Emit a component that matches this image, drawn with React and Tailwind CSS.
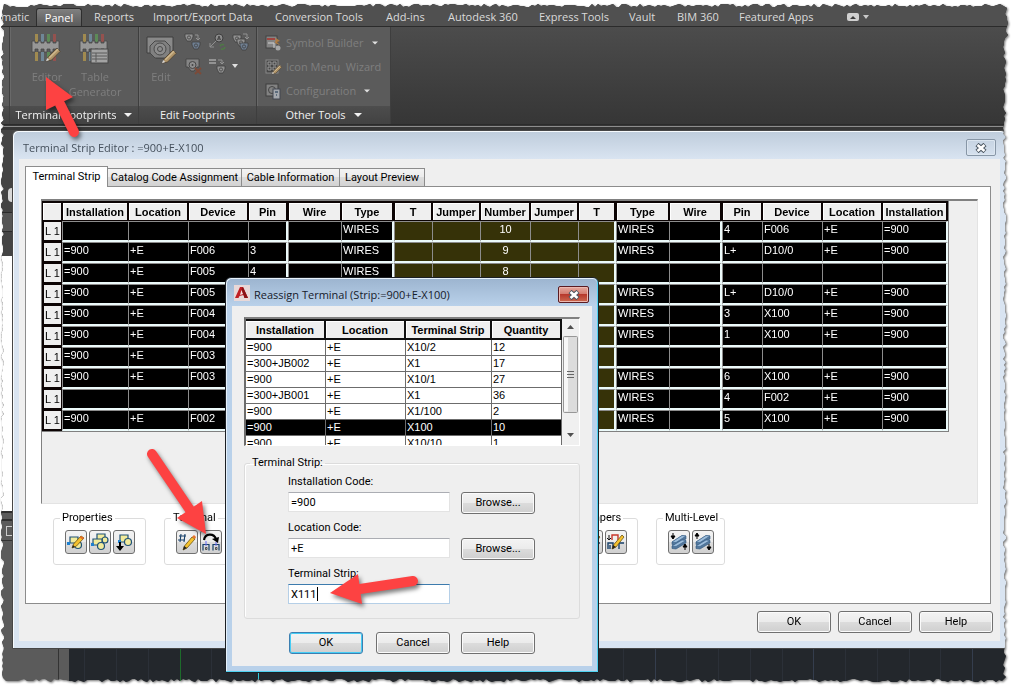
import React from 'react';

const ribbonTabs = [
  { label: 'Reports', width: 'w-[59px]' },
  { label: 'Import/Export Data', width: 'w-[122px]' },
  { label: 'Conversion Tools', width: 'w-[111px]' },
  { label: 'Add-ins', width: 'w-[62px]' },
  { label: 'Autodesk 360', width: 'w-[91px]' },
  { label: 'Express Tools', width: 'w-[90px]' },
  { label: 'Vault', width: 'w-[48px]' },
  { label: 'BIM 360', width: 'w-[62px]' },
  { label: 'Featured Apps', width: 'w-[108px]' },
];

const columns = [
  { name: '', width: 'w-[20px]' },
  { name: 'Installation', width: 'w-[66px]' },
  { name: 'Location', width: 'w-[60px]' },
  { name: 'Device', width: 'w-[60px]' },
  { name: 'Pin', width: 'w-[40px]', thick: true },
  { name: 'Wire', width: 'w-[53px]' },
  { name: 'Type', width: 'w-[53px]', thick: true },
  { name: 'T', width: 'w-[38px]', mid: true },
  { name: 'Jumper', width: 'w-[48px]', mid: true },
  { name: 'Number', width: 'w-[50px]', mid: true },
  { name: 'Jumper', width: 'w-[48px]', mid: true },
  { name: 'T', width: 'w-[38px]', mid: true, thick: true },
  { name: 'Type', width: 'w-[53px]' },
  { name: 'Wire', width: 'w-[53px]', thick: true },
  { name: 'Pin', width: 'w-[40px]' },
  { name: 'Device', width: 'w-[60px]' },
  { name: 'Location', width: 'w-[60px]' },
  { name: 'Installation', width: 'w-[66px]', thick: true },
];

// left: installation, location, device, pin, wire, type; right: type, wire, pin, device, location, installation
const terminals = [
  { n: 10, left: ['', '', '', '', '', 'WIRES'], right: ['WIRES', '', '4', 'F006', '+E', '=900'] },
  { n: 9, left: ['=900', '+E', 'F006', '3', '', 'WIRES'], right: ['WIRES', '', 'L+', 'D10/0', '+E', '=900'] },
  { n: 8, left: ['=900', '+E', 'F005', '4', '', 'WIRES'], right: ['', '', '', '', '', ''] },
  { n: 7, left: ['=900', '+E', 'F005', '', '', ''], right: ['WIRES', '', 'L+', 'D10/0', '+E', '=900'] },
  { n: 6, left: ['=900', '+E', 'F004', '', '', ''], right: ['WIRES', '', '3', 'X100', '+E', '=900'] },
  { n: 5, left: ['=900', '+E', 'F004', '', '', ''], right: ['WIRES', '', '1', 'X100', '+E', '=900'] },
  { n: 4, left: ['=900', '+E', 'F003', '', '', ''], right: ['', '', '', '', '', ''] },
  { n: 3, left: ['=900', '+E', 'F003', '', '', ''], right: ['WIRES', '', '6', 'X100', '+E', '=900'] },
  { n: 2, left: ['', '', '', '', '', ''], right: ['WIRES', '', '4', 'F002', '+E', '=900'] },
  { n: 1, left: ['=900', '+E', 'F002', '', '', ''], right: ['WIRES', '', '5', 'X100', '+E', '=900'] },
];

const strips = [
  ['=900', '+E', 'X10/2', '12'],
  ['=300+JB002', '+E', 'X1', '17'],
  ['=900', '+E', 'X10/1', '27'],
  ['=300+JB001', '+E', 'X1', '36'],
  ['=900', '+E', 'X1/100', '2'],
  ['=900', '+E', 'X100', '10'],
  ['=900', '+E', 'X10/10', '1'],
];

// Ragged paper outline, measured inwards from each side
function tornOutline() {
  let seed = 41;
  const jag = (amp) => {
    seed = (seed * 16807) % 2147483647;
    return Math.round((seed / 2147483647) * amp);
  };
  const pts = [];
  for (let x = 4; x < 1002; x += 3) pts.push(`${x}px ${4 + jag(3)}px`);
  for (let y = 8; y < 680; y += 3) {
    const inset = y < 40 ? 6 : 8;
    pts.push(`calc(100% - ${inset + jag(3)}px) ${y}px`);
  }
  for (let x = 1002; x > 5; x -= 3) pts.push(`${x}px ${679 + jag(3)}px`);
  for (let y = 678; y > 6; y -= 3) pts.push(`${1 + jag(3)}px ${y}px`);
  return `polygon(${pts.join(', ')})`;
}

function Caret({ className = '' }) {
  return (
    <svg width="8" height="4" viewBox="0 0 8 4" className={className} aria-hidden="true">
      <path d="M0 0h8L4 4z" fill="currentColor" />
    </svg>
  );
}

function Pencil({ x, y, s = 1 }) {
  return (
    <g transform={`translate(${x} ${y}) scale(${s})`}>
      <path d="M0 12L2 8 10 0l3 3-8 8z" fill="#b09468" stroke="#504538" strokeWidth="0.8" />
      <path d="M3 9L11 1" stroke="#d0bb93" strokeWidth="1.2" />
      <path d="M0 12l1-3 2 2z" fill="#d5d5d5" />
    </g>
  );
}

function TerminalIcon({ table }) {
  const wires = ['#a08a50', '#6f8797', '#5d8a58', '#94524f'];
  return (
    <svg width="32" height="32" viewBox="0 0 32 32" aria-hidden="true">
      {wires.map((c, i) => (
        <g key={c} fill={c}>
          <rect x={4 + i * 6} y="1" width="3" height="8" />
          <rect x={4 + i * 6} y="19" width="3" height="9" />
        </g>
      ))}
      <path
        d="M1 8h3v2h3V8h3v2h3V8h3v2h3V8h3v2h3V8h3v11h-3v-3h-3v3h-3v-3h-3v3h-3v-3h-3v3H7v-3H4v3H1z"
        fill="#979797"
        stroke="#464646"
        strokeWidth="0.8"
      />
      {table ? (
        <g>
          <rect x="12" y="16" width="17" height="14" fill="#a3a3a3" stroke="#474747" />
          <path d="M13 20h15M13 23h15M13 26h15M17 20v9" stroke="#5a5a5a" />
        </g>
      ) : (
        <Pencil x={15} y={15} s={1.1} />
      )}
    </svg>
  );
}

function FootprintIcon() {
  return (
    <svg width="32" height="32" viewBox="0 0 32 32" aria-hidden="true">
      <path d="M2 4h26v16h-4l-5 5h-8l-5-5H2z" fill="#898989" stroke="#3e3e3e" />
      <path d="M10 8h10l5 5v7l-5 5H10l-5-5v-7z" fill="#808080" stroke="#484848" />
      <circle cx="15" cy="16" r="6" fill="#8d8d8d" stroke="#4b4b4b" />
      <circle cx="15" cy="16" r="2.5" fill="none" stroke="#4b4b4b" />
      <Pencil x={17} y={17} s={1.1} />
    </svg>
  );
}

function SmallFootprint({ x, y, fill = '#929292' }) {
  return (
    <g transform={`translate(${x} ${y})`}>
      <path d="M0 0h8v3L6 7H2L0 3z" fill={fill} stroke="#3f3f3f" strokeWidth="0.8" />
      <circle cx="4" cy="3.5" r="1.6" fill="none" stroke="#3f3f3f" strokeWidth="0.8" />
    </g>
  );
}

function MiniIcon({ kind }) {
  return (
    <svg width="18" height="18" viewBox="0 0 18 18" aria-hidden="true">
      {kind === 'copy' && (
        <g>
          <SmallFootprint x={1} y={1} />
          <SmallFootprint x={8} y={9} fill="#6f7f92" />
          <path d="M11 2h3v4M12 5l2 2 2-2" fill="none" stroke="#929292" />
        </g>
      )}
      {kind === 'rename' && (
        <g>
          <circle cx="11" cy="5" r="4" fill="#8b8b8b" stroke="#3f3f3f" />
          <path d="M9.5 7L11 3l1.5 4M10 6h2" stroke="#333" strokeWidth="0.8" fill="none" />
          <path d="M8 8l-6 6M2 10v4h4" fill="none" stroke="#909090" />
          <path d="M12 13a3 3 0 0 1 4-1M17 14a3 3 0 0 1-4 2" fill="none" stroke="#4e7b45" strokeWidth="1.4" />
        </g>
      )}
      {kind === 'multi' && (
        <g>
          <SmallFootprint x={1} y={2} />
          <SmallFootprint x={5} y={6} />
          <SmallFootprint x={8} y={10} fill="#6f7f92" />
          <path d="M11 1h4v4M13 4l2 2 2-2" fill="none" stroke="#929292" />
        </g>
      )}
      {kind === 'delete' && (
        <g>
          <path d="M2 2h13v8h-2l-3 4H7l-3-4H2z" fill="#858585" stroke="#404040" strokeWidth="0.8" />
          <circle cx="8.5" cy="8" r="3.5" fill="#8f8f8f" stroke="#464646" />
          <circle cx="8.5" cy="8" r="1" fill="#464646" />
          <path d="M11 11l6 6M17 11l-6 6" stroke="#7d4a38" strokeWidth="1.8" />
        </g>
      )}
      {kind === 'list' && (
        <g>
          <path d="M1 3h7M1 6h7" stroke="#939393" strokeWidth="2" />
          <path d="M10 3h4v4M12 5l2 2 2-2" fill="none" stroke="#929292" />
          <SmallFootprint x={9} y={9} />
        </g>
      )}
      {kind === 'builder' && (
        <g>
          <rect x="2" y="2" width="11" height="12" fill="#848484" stroke="#424242" />
          <path d="M3 5h8" stroke="#a04540" strokeWidth="2" />
          <path d="M4 9h6v5" stroke="#d0d0d0" fill="none" />
          <path d="M12 4l4 3-3 1 3 3-5-2z" fill="#b07c42" />
          <circle cx="14" cy="14" r="2.5" fill="#a8a8a8" />
        </g>
      )}
      {kind === 'menu' && (
        <g>
          <rect x="2" y="2" width="12" height="13" fill="#474747" stroke="#898989" />
          <path d="M4 4h3v3H4zM9 4h3v3H9zM4 9h3v3H4zM9 9h3v3H9z" fill="none" stroke="#999" />
          <Pencil x={8} y={7} s={0.75} />
        </g>
      )}
      {kind === 'config' && (
        <g>
          <rect x="2" y="2" width="12" height="12" fill="#828282" stroke="#3f3f3f" />
          <circle cx="8" cy="8" r="3.5" fill="none" stroke="#444" />
          <rect x="9" y="7" width="7" height="10" fill="#a4a8ae" stroke="#424750" />
          <path d="M11 10h3M12 13h1" stroke="#44586e" strokeWidth="1.5" />
        </g>
      )}
    </svg>
  );
}

function ToolIcon({ kind }) {
  return (
    <svg width="18" height="18" viewBox="0 0 18 18" aria-hidden="true">
      {(kind === 'edit' || kind === 'copy' || kind === 'pick') && (
        <g stroke="#1f5276" strokeWidth="1.2" fill="#f2eb9b">
          {kind === 'edit' && (
            <g>
              <circle cx="11" cy="12" r="3.5" />
              <path d="M3 4h8v6H3z" />
              <rect x="0" y="9" width="3" height="3" fill="#1d80d0" stroke="none" />
              <path d="M5 15l1.5-4L14 3l3 2-7.5 8z" fill="#f5c22e" stroke="#6b5410" strokeWidth="0.8" />
              <path d="M14 3l3 2-1.5 1.5-3-2z" fill="#e86f28" stroke="none" />
              <path d="M5 15l1-3 2 2z" fill="#222" stroke="none" />
            </g>
          )}
          {kind === 'copy' && (
            <g>
              <path d="M6 1h8v6H6z" />
              <circle cx="14" cy="7" r="3" />
              <path d="M2 6h9v6H2z" />
              <circle cx="10" cy="13" r="3.5" />
              <rect x="0" y="10" width="3" height="3" fill="#1d80d0" stroke="none" />
            </g>
          )}
          {kind === 'pick' && (
            <g>
              <path d="M5 2h8v7H5z" />
              <circle cx="13" cy="9" r="3.5" />
              <rect x="3" y="7" width="3" height="3" fill="#1d80d0" stroke="none" />
              <path d="M4 9v4H1l4 5 4-5H6V9z" fill="#000" stroke="none" />
            </g>
          )}
        </g>
      )}
      {kind === 'number' && (
        <g>
          <path d="M3 1L2 9M7 1L6 9M1 3h7M0 7h7" stroke="#17406a" strokeWidth="1.1" />
          <path d="M5 17l1.5-4L14 4l3 2-8 9z" fill="#f5c22e" stroke="#6b5410" strokeWidth="0.8" />
          <path d="M14 4l2-2 2 2-1 2z" fill="#e8732a" />
          <path d="M5 17l1-4 3 2z" fill="#222" />
        </g>
      )}
      {kind === 'reassign' && (
        <g>
          <path d="M2 7c1-7 10-7 12-1" fill="none" stroke="#000" strokeWidth="2.2" />
          <path d="M10 6l7-2-1 6z" fill="#000" />
          <path d="M1 17.500v-6h6v6M11 17.500v-6h6v6" fill="none" stroke="#17406a" strokeWidth="1.2" />
          <path d="M3.500 14.500h1.500v2h-1.500zM13.500 14.500h1.500v2h-1.500z" fill="none" stroke="#333" strokeWidth="0.8" />
          <path d="M4 8v5M14 9v4" stroke="#6a6af5" />
        </g>
      )}
      {kind === 'jumper' && (
        <g>
          <path d="M2 2v5M0 5l2 2 2-2" fill="none" stroke="#111" />
          <path d="M5 7V2h6v5" fill="none" stroke="#c8372d" strokeWidth="1.4" />
          <path d="M1 16v-6h5v6M12 16v-6h5M3 12v4" fill="none" stroke="#17406a" strokeWidth="1.4" />
          <path d="M5 16l1.5-4L15 2l2 2-8 10z" fill="#f5c22e" stroke="#6b5410" strokeWidth="0.8" />
          <path d="M5 16l1-4 3 2z" fill="#222" />
        </g>
      )}
      {(kind === 'levelDown' || kind === 'levelUp') && (
        <g>
          <g fill="#54789c" stroke="#2f587f" strokeWidth="0.6">
            <path d="M2 9v2.500l4 .5 10-6V3l-4-.5z" />
            <path d="M2 13v2.500l4 .5 10-6V7.500l-4-.5z" />
          </g>
          <g fill="#9dbddb" stroke="#39628a" strokeWidth="0.6">
            <path d="M2 9l10-6.500 4 .5-10 6.500z" />
            <path d="M2 13l10-6 4 .5-10 6z" />
          </g>
          {kind === 'levelDown' ? (
            <path d="M3 0v5M1 3l2 3 2-3zM15 17v-5M13 14l2-3 2 3z" fill="#000" stroke="#000" />
          ) : (
            <path d="M3 6V1M1 3l2-3 2 3zM15 11v5M13 14l2 3 2-3z" fill="#000" stroke="#000" />
          )}
        </g>
      )}
    </svg>
  );
}

function RibbonPanel({ title, caret, width, children }) {
  return (
    <section className={`flex flex-col border-r border-[#3e3e3e] ${width}`}>
      <div className="flex-1 border-l border-[#696969] bg-[#5b5b5b]">{children}</div>
      <h2 className="flex h-[18px] items-center justify-center gap-2 bg-gradient-to-b from-[#4d4d4d] to-[#424242] leading-[18px] text-[#f2f2f2]">
        {title}
        {caret && <Caret />}
      </h2>
    </section>
  );
}

function Ribbon() {
  const disabled = 'text-[#7f7f7f]';
  return (
    <header className="h-[130px] bg-[#363636] font-['Open_Sans',sans-serif] text-[11px]">
      <nav className="flex h-[27px] items-end border-b border-[#2b2b2b] bg-[#505050] leading-[18px] whitespace-nowrap text-[#dadada]">
        <button type="button" className="w-[36px] pl-px text-left">matic</button>
        <button
          type="button"
          className="h-[18px] w-[46px] rounded-t-[3px] border border-b-0 border-[#2e2e2e] bg-gradient-to-b from-[#808080] to-[#5b5b5b] text-center leading-[16px] text-white"
        >
          Panel
        </button>
        <div className="flex pl-3">
          {ribbonTabs.map((tab) => (
            <button key={tab.label} type="button" className={`text-left ${tab.width}`}>
              {tab.label}
            </button>
          ))}
        </div>
        <button type="button" aria-label="Minimize ribbon" className="flex h-[18px] items-center gap-1">
          <svg width="12" height="9" viewBox="0 0 12 9" aria-hidden="true">
            <rect width="12" height="8" rx="2" fill="#d0d0d0" />
            <path d="M3 6h6L6 3z" fill="#3a3a3a" />
          </svg>
          <svg width="6" height="4" viewBox="0 0 6 4" aria-hidden="true">
            <path d="M0 0h6L3 4z" fill="#c8c8c8" />
          </svg>
        </button>
      </nav>
      <div className="flex h-[98px] border-b border-[#2b2b2b] bg-gradient-to-b from-[#4c4c4c] to-[#363636]">
        <RibbonPanel width="w-[10px]" />
        <RibbonPanel title="Terminal Footprints" caret width="w-[129px]">
          <div className={`flex pt-1.5 pl-3 leading-[15px] ${disabled}`}>
            <button type="button" className="flex w-[48px] flex-col items-center gap-1">
              <TerminalIcon />
              Editor
            </button>
            <button type="button" className="flex w-[48px] flex-col items-center gap-1">
              <TerminalIcon table />
              <span>Table Generator</span>
            </button>
          </div>
        </RibbonPanel>
        <RibbonPanel title="Edit Footprints" width="w-[118px]">
          <div className={`flex gap-1.5 pt-1.5 pl-1 leading-[15px] ${disabled}`}>
            <button type="button" className="flex w-[34px] flex-col items-center gap-1">
              <FootprintIcon />
              Edit
            </button>
            <div className="grid grid-cols-3 content-start gap-1.5">
              <button type="button" aria-label="Copy footprint"><MiniIcon kind="copy" /></button>
              <button type="button" aria-label="Rename footprint"><MiniIcon kind="rename" /></button>
              <button type="button" aria-label="Copy list"><MiniIcon kind="multi" /></button>
              <button type="button" aria-label="Delete footprint"><MiniIcon kind="delete" /></button>
              <button type="button" aria-label="Resequence"><MiniIcon kind="list" /></button>
              <button type="button" aria-label="More" className="flex items-center text-[#e0e0e0]">
                <svg width="6" height="4" viewBox="0 0 6 4"><path d="M0 0h6L3 4z" fill="currentColor" /></svg>
              </button>
            </div>
          </div>
        </RibbonPanel>
        <RibbonPanel title="Other Tools" caret width="w-[134px]">
          <div className={`flex flex-col gap-1.5 pt-[7px] pl-[6px] leading-[18px] whitespace-nowrap ${disabled}`}>
            <button type="button" className="flex items-center gap-1">
              <MiniIcon kind="builder" />
              Symbol Builder
              <Caret className="ml-1 w-[6px] text-[#e0e0e0]" />
            </button>
            <button type="button" className="flex items-center gap-1">
              <MiniIcon kind="menu" />
              Icon Menu&nbsp; Wizard
            </button>
            <button type="button" className="flex items-center gap-1">
              <MiniIcon kind="config" />
              Configuration
              <Caret className="ml-1 w-[6px] text-[#e0e0e0]" />
            </button>
          </div>
        </RibbonPanel>
      </div>
      <div className="h-[2px] border-b border-[#8d8d8d]" />
    </header>
  );
}

function PushButton({ children, primary }) {
  return (
    <button
      type="button"
      className={`h-[22px] w-[74px] rounded-[3px] border bg-[linear-gradient(#f3f3f3,#ebebeb_50%,#dcdcdc_50%,#cfcfcf)] text-center leading-[20px] text-black ${
        primary
          ? 'border-[#3c7fb1] shadow-[inset_0_0_0_1px_#45cdf5]'
          : 'border-[#707070] shadow-[inset_0_0_0_1px_#fbfbfb]'
      }`}
    >
      {children}
    </button>
  );
}

function ToolButton({ kind, label }) {
  return (
    <button
      type="button"
      aria-label={label}
      className="flex h-[24px] w-[22px] items-center justify-center rounded-[3px] border border-[#707070] bg-[linear-gradient(#f3f3f3,#ebebeb_50%,#dddddd_50%,#d0d0d0)]"
    >
      <ToolIcon kind={kind} />
    </button>
  );
}

function ToolGroup({ title, width, children }) {
  return (
    <fieldset className={`h-[54px] shrink-0 rounded-[3px] border border-[#dcdcdc] pl-[11px] ${width}`}>
      <legend className="-ml-[5px] px-[2px] leading-[14px] whitespace-nowrap">{title}</legend>
      <div className="mt-[5px] flex gap-[2px]">{children}</div>
    </fieldset>
  );
}

function TerminalTable() {
  return (
    <table className="w-[906px] table-fixed border-separate border-spacing-0 border-r border-b border-[#808080] font-['Liberation_Sans',Arial,sans-serif] text-[11px]">
      <thead>
        <tr>
          {columns.map((col, i) => (
            <th
              key={i}
              scope="col"
              className={`h-[20px] overflow-hidden border-t-2 border-b border-l border-[#0c0404] bg-[#efefef] p-0 text-center leading-[16px] font-bold whitespace-nowrap shadow-[inset_1px_1px_0_#fff] ${col.width} ${
                col.thick ? 'border-r-2' : 'border-r'
              }`}
            >
              {col.name}
            </th>
          ))}
        </tr>
      </thead>
      <tbody>
        {terminals.map((row) => {
          const cells = [...row.left, '', '', row.n, '', '', ...row.right];
          return (
            <tr key={row.n}>
              <th
                scope="row"
                className="h-[21px] border-2 border-t-1 border-r-1 border-[#0c0404] bg-[#efefef] p-0 text-center leading-[16px] font-normal whitespace-nowrap"
              >
                L 1
              </th>
              {cells.map((value, i) => {
                const col = columns[i + 1];
                const covered = row.n < 8 && i > 2 && i < 11;
                return (
                  <td
                    key={i}
                    className={`h-[21px] border-t border-b-2 border-l border-t-[#8c8c8c] border-b-[#ecfafa] border-l-[#8c8c8c] p-0 align-top leading-[15px] text-white ${
                      col.mid ? 'bg-[#363208]' : 'bg-black'
                    } ${col.thick ? 'border-r-2 border-r-[#ecfafa]' : ''} ${
                      col.name === 'Number' ? 'text-center' : 'pl-px'
                    }`}
                  >
                    {covered ? '' : value}
                  </td>
                );
              })}
            </tr>
          );
        })}
      </tbody>
    </table>
  );
}

function EditorWindow() {
  const tab = 'h-[18px] border border-b-0 border-[#8c8c8c] bg-[linear-gradient(#f3f3f3,#ebebeb_50%,#dddddd_50%,#d2d2d2)] text-center leading-[17px] whitespace-nowrap';
  return (
    <section className="min-w-0 flex-1 rounded-t-[6px] border border-[#464646] bg-[#d9e4f1] px-[6px] pb-[7px] font-[Roboto,sans-serif] text-[11px] text-black shadow-[inset_1px_1px_0_#f6fafd]">
      <div className="-mx-[5px] mt-px flex h-[27px] items-center justify-between rounded-t-[5px] bg-gradient-to-b from-[#bfcddc] to-[#d9e4f1] pr-[9px] pl-[9px]">
        <h1 className="pt-1 font-['Open_Sans',sans-serif] leading-[18px] text-[#45505c]">
          Terminal Strip Editor : =900+E-X100
        </h1>
        <button
          type="button"
          aria-label="Close editor"
          className="mt-1 flex h-[17px] w-[30px] items-center justify-center rounded-[2px] border border-[#8796a6] shadow-[inset_0_0_0_1px_#dce6f0]"
        >
          <CloseGlyph />
        </button>
      </div>
      <div className="bg-[#efefef] px-[6px] pt-[7px] pb-2">
        <div role="tablist" className="flex items-end">
          <button type="button" role="tab" aria-selected="true" className="-mb-px h-[21px] w-[83px] border border-b-0 border-[#8c8c8c] bg-white pb-px text-center leading-[18px]">
            Terminal Strip
          </button>
          <button type="button" role="tab" className={`w-[134px] border-l-0 ${tab}`}>Catalog Code Assignment</button>
          <button type="button" role="tab" className={`w-[98px] border-l-0 ${tab}`}>Cable Information</button>
          <button type="button" role="tab" className={`w-[85px] border-l-0 ${tab}`}>Layout Preview</button>
        </div>
        <div className="mr-[3px] h-[418px] border border-[#8c8c8c] bg-white pt-3 pr-3 pl-[15px]">
          <div className="h-[305px] overflow-hidden border border-t-2 border-t-[#808080] border-r-[#e3e3e3] border-b-[#e3e3e3] border-l-[#808080] bg-[#efefef]">
            <TerminalTable />
          </div>
          <div className="mt-[7px] flex pl-3">
            <ToolGroup title="Properties" width="w-[93px]">
              <ToolButton kind="edit" label="Edit properties" />
              <ToolButton kind="copy" label="Copy properties" />
              <ToolButton kind="pick" label="Paste properties" />
            </ToolGroup>
            <div className="w-[18px]" />
            <ToolGroup title="Terminal" width="w-[387px]">
              <ToolButton kind="number" label="Edit terminal" />
              <ToolButton kind="reassign" label="Reassign terminal" />
            </ToolGroup>
            <div className="w-[18px]" />
            <ToolGroup title="Jumpers" width="w-[69px]">
              <ToolButton kind="jumper" label="Add jumper" />
              <ToolButton kind="jumper" label="Edit jumper" />
            </ToolGroup>
            <div className="w-[18px]" />
            <ToolGroup title="Multi-Level" width="w-[69px]">
              <ToolButton kind="levelDown" label="Assign level" />
              <ToolButton kind="levelUp" label="Remove level" />
            </ToolGroup>
          </div>
        </div>
        <div className="mt-[7px] mr-px flex justify-end gap-[7px]">
          <PushButton>OK</PushButton>
          <PushButton>Cancel</PushButton>
          <PushButton>Help</PushButton>
        </div>
      </div>
    </section>
  );
}

function CloseGlyph() {
  return (
    <svg width="12" height="10" viewBox="0 0 12 10" aria-hidden="true">
      <path d="M2 1.5l8 7M10 1.5l-8 7" stroke="#4a5560" strokeWidth="4.6" />
      <path d="M2.500 2l7 6M9.500 2l-7 6" stroke="#fff" strokeWidth="2.6" />
    </svg>
  );
}

function Field({ id, label, value, browse, active }) {
  return (
    <div className="h-[46px]">
      <label htmlFor={id} className="block leading-[14px]">{label}</label>
      <div className="mt-[3px] flex items-start gap-[11px]">
        <div className="relative">
          <input
            id={id}
            type="text"
            defaultValue={value}
            className={`block h-[20px] w-[162px] border bg-white px-[2px] leading-[18px] outline-none ${
              active
                ? 'border-[#b5cfe7] border-t-[#3d7bad]'
                : 'border-[#e3e3e3] border-t-[#abadb3]'
            }`}
          />
          {active && <span className="absolute top-[3px] left-[29px] h-[14px] w-px bg-black" />}
        </div>
        {browse && <PushButton>Browse...</PushButton>}
      </div>
    </div>
  );
}

function ReassignDialog() {
  const head = 'h-[21px] border-t-2 border-r-2 border-b-2 border-[#101010] bg-[#efefef] p-0 text-center leading-[16px] font-bold shadow-[inset_1px_1px_0_#fff]';
  return (
    <section
      role="dialog"
      aria-label="Reassign Terminal"
      className="absolute top-[277px] left-[225px] w-[374px] rounded-t-[6px] border border-[#1b1f24] bg-[#b9d1ea] px-[6px] pb-[6px] font-[Roboto,sans-serif] text-[11px] text-black shadow-[inset_-1px_-1px_0_#4fd2f0,inset_1px_1px_0_#e6f1fb]"
    >
      <div className="-mx-[5px] mt-px flex h-[27px] items-center rounded-t-[5px] bg-gradient-to-b from-[#9db5d0] to-[#b9d1ea] pr-2 pl-[7px]">
        <svg width="16" height="16" viewBox="0 0 16 16" aria-hidden="true">
          <rect width="16" height="16" fill="#e8d8d8" />
          <path d="M1 13L6 2h3l5 11h-3.500l-1-3-4 1L4.500 13z" fill="#c01f24" />
          <path d="M7.500 5l1.500 4-3 1z" fill="#f1e2e2" />
          <path d="M9 2l5 11h-3.500L7.500 4z" fill="#8b1216" />
        </svg>
        <h2 className="flex-1 pt-1 pl-1 font-['Open_Sans',sans-serif] leading-[18px] text-[#16202b]">
          Reassign Terminal (Strip:=900+E-X100)
        </h2>
        <button
          type="button"
          aria-label="Close dialog"
          className="mt-1 flex h-[17px] w-[31px] items-center justify-center rounded-[2px] border border-[#5a1c22] bg-[linear-gradient(#e5a99f,#d3786b_50%,#b7392c_50%,#cc6a51)] shadow-[inset_0_0_0_1px_#ecb9b1]"
        >
          <CloseGlyph />
        </button>
      </div>
      <div className="h-[360px] bg-[#efefef] px-3 pt-[11px]">
        <div className="flex h-[129px] overflow-hidden border border-t-2 border-l-2 border-t-[#808080] border-r-white border-b-white border-l-[#6c6c6c]">
          <table className="h-fit w-[316px] table-fixed border-separate border-spacing-0 font-['Liberation_Sans',Arial,sans-serif]">
            <thead>
              <tr>
                <th scope="col" className={`w-[80px] ${head}`}>Installation</th>
                <th scope="col" className={`w-[80px] ${head}`}>Location</th>
                <th scope="col" className={`w-[86px] whitespace-nowrap ${head}`}>Terminal Strip</th>
                <th scope="col" className={`w-[70px] ${head}`}>Quantity</th>
              </tr>
            </thead>
            <tbody>
              {strips.map((row, r) => (
                <tr key={r} className={r === 5 ? 'bg-black text-white' : 'bg-white'}>
                  {row.map((value, c) => (
                    <td key={c} className="h-[16px] border-r border-b border-[#6c6c6c] p-0 pl-px leading-[15px]">
                      {value}
                    </td>
                  ))}
                </tr>
              ))}
            </tbody>
          </table>
          <div className="flex flex-1 flex-col items-center bg-[#f0f0f0]">
            <svg width="15" height="124" viewBox="0 0 15 124" aria-hidden="true">
              <path d="M4 10h7L7.500 6z" fill="#505050" />
              <rect x="0.5" y="17.5" width="14" height="76" rx="1" fill="#dcdcdc" stroke="#979797" />
              <path d="M3 18.500v74" stroke="#f7f7f7" strokeWidth="4" />
              <path d="M4 52.500h7M4 55.500h7M4 58.500h7" stroke="#666" />
              <path d="M4 114h7l-3.500 4z" fill="#505050" />
            </svg>
          </div>
        </div>
        <fieldset className="mt-[10px] h-[163px] rounded-[3px] border border-[#dcdcdc] pl-[43px] shadow-[inset_1px_1px_0_#fff]">
          <legend className="-ml-[38px] px-[2px] leading-[14px]">Terminal Strip:</legend>
          <div className="pt-[5px]">
            <Field id="installation-code" label="Installation Code:" value="=900" browse />
            <Field id="location-code" label="Location Code:" value="+E" browse />
            <Field id="terminal-strip" label="Terminal Strip:" value="X111" active />
          </div>
        </fieldset>
        <div className="mt-[13px] flex pl-[45px]">
          <PushButton primary>OK</PushButton>
          <div className="ml-[13px] flex gap-[11px]">
            <PushButton>Cancel</PushButton>
            <PushButton>Help</PushButton>
          </div>
        </div>
      </div>
    </section>
  );
}

function DrawingCanvas() {
  const faint = [15, 47, 79, 142, 554, 617, 649, 681, 713, 776, 808, 840, 871];
  const strong = [586, 744, 903];
  return (
    <div className="flex h-[42px] bg-[#5b5b5b]">
      <div className="w-[59px] border-r border-[#333]" />
      <div className="w-[10px]" />
      <svg className="h-full min-w-0 flex-1 bg-[#23272c]" aria-hidden="true">
        {faint.map((x) => <path key={x} d={`M${x}.5 0v42`} stroke="#2b3038" />)}
        {strong.map((x) => <path key={x} d={`M${x}.5 0v42`} stroke="#343d4d" />)}
        <path d="M111.5 0v42" stroke="#1d6b2b" />
        <path d="M189.5 24v18" stroke="#35c8d8" />
      </svg>
    </div>
  );
}

function Arrows() {
  return (
    <svg className="pointer-events-none absolute top-0 left-0 drop-shadow-[2px_3px_2px_rgba(0,0,0,0.5)]" width="600" height="690" viewBox="0 0 600 690" aria-hidden="true">
      <g fill="#fd4242" stroke="#fd4242" strokeLinecap="round">
        <path d="M74 132L60 104" strokeWidth="10" />
        <path d="M46 77l27 20-27 13z" stroke="none" />
        <path d="M152 454L190 510" strokeWidth="10" />
        <path d="M206 534l-29-16 25-17z" stroke="none" />
        <path d="M413 581L360 589" strokeWidth="10" />
        <path d="M330 593l28-19 4 30z" stroke="none" />
      </g>
    </svg>
  );
}

export default function App() {
  return (
    <div className="relative min-h-[690px] overflow-hidden bg-white">
      <div className="drop-shadow-[1px_1px_1px_rgba(0,0,0,0.55)]">
        <div style={{ clipPath: tornOutline() }}>
          <Ribbon />
          <main className="flex bg-[#464646] pr-[7px]">
            <div className="flex w-3 shrink-0 flex-col">
              <div className="h-[126px] bg-[#444]">
                <div className="h-[58px]" />
                <div className="ml-2 h-[14px] rounded-l-full bg-[#d8d8d8]" />
                <div className="mt-[10px] h-[20px] border-y border-[#2b2b2b] bg-[#555]" />
              </div>
              <div className="h-[255px] bg-white" />
              <div className="flex-1 bg-[#5b5b5b]">
                <div className="h-[10px] border-y-2 border-[#2f2f2f]" />
                <div className="h-[20px] border-b border-[#333] pt-[5px] pl-[6px]">
                  <div className="h-[10px] border border-r-0 border-[#ccc]" />
                </div>
              </div>
            </div>
            <EditorWindow />
          </main>
          <DrawingCanvas />
        </div>
      </div>
      <ReassignDialog />
      <Arrows />
    </div>
  );
}
